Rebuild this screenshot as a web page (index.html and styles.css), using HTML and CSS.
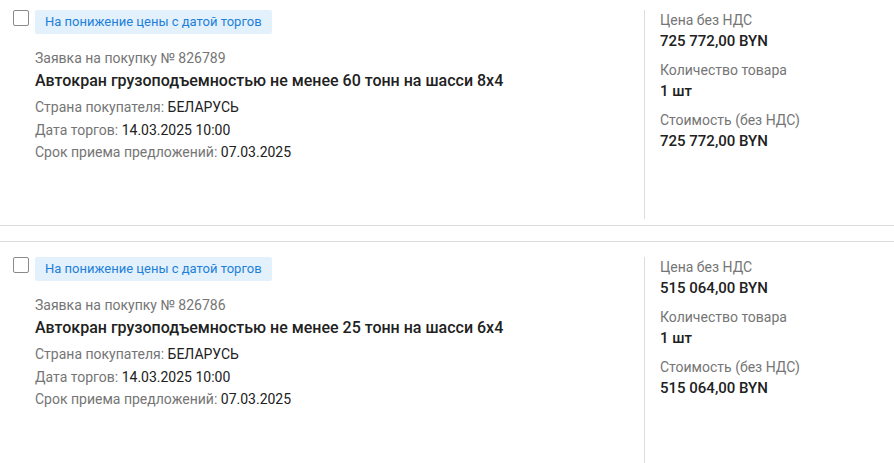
FILE: index.html
```html
<!DOCTYPE html>
<html lang="ru">
<head>
    <meta charset="UTF-8">
    <meta name="viewport" content="width=device-width, initial-scale=1.0">
    <title>Заявки на покупку</title>
    <link rel="stylesheet" href="styles.css">
</head>
<body>
    <div class="list">
        <div class="item first">
            <div class="main">
                <span class="check"></span>
                <div class="info">
                    <span class="tag">На понижение цены с датой торгов</span>
                    <div class="number">Заявка на покупку № 826789</div>
                    <div class="title">Автокран грузоподъемностью не менее 60 тонн на шасси 8x4</div>
                    <div class="line">Страна покупателя: <span>БЕЛАРУСЬ</span></div>
                    <div class="line">Дата торгов: <span>14.03.2025 10:00</span></div>
                    <div class="line">Срок приема предложений: <span>07.03.2025</span></div>
                </div>
            </div>
            <div class="side">
                <div class="group">
                    <div class="label">Цена без НДС</div>
                    <div class="value">725 772,00 BYN</div>
                </div>
                <div class="group">
                    <div class="label">Количество товара</div>
                    <div class="value">1 шт</div>
                </div>
                <div class="group">
                    <div class="label">Стоимость (без НДС)</div>
                    <div class="value">725 772,00 BYN</div>
                </div>
            </div>
        </div>

        <div class="item">
            <div class="main">
                <span class="check"></span>
                <div class="info">
                    <span class="tag">На понижение цены с датой торгов</span>
                    <div class="number">Заявка на покупку № 826786</div>
                    <div class="title">Автокран грузоподъемностью не менее 25 тонн на шасси 6x4</div>
                    <div class="line">Страна покупателя: <span>БЕЛАРУСЬ</span></div>
                    <div class="line">Дата торгов: <span>14.03.2025 10:00</span></div>
                    <div class="line">Срок приема предложений: <span>07.03.2025</span></div>
                </div>
            </div>
            <div class="side">
                <div class="group">
                    <div class="label">Цена без НДС</div>
                    <div class="value">515 064,00 BYN</div>
                </div>
                <div class="group">
                    <div class="label">Количество товара</div>
                    <div class="value">1 шт</div>
                </div>
                <div class="group">
                    <div class="label">Стоимость (без НДС)</div>
                    <div class="value">515 064,00 BYN</div>
                </div>
            </div>
        </div>
    </div>
</body>
</html>
```

FILE: styles.css
```css
body {
    margin: 0;
    font-family: Roboto, "Liberation Sans", Arial, sans-serif;
    font-size: 14px;
    color: #212121;
    background-color: white;
}
.list { overflow: hidden; height: 463px; }
.item {
    display: flex;
    padding: 15px 0 6px;
    border-top: 1px solid #dddddd;
    border-bottom: 1px solid #dddddd;
    margin-bottom: 15px;
}
.item.first { border-top: none; padding-top: 10px; }
.main {
    flex: 1;
    display: flex;
    gap: 6px;
    padding-left: 13px;
}
.check {
    width: 14px;
    height: 14px;
    border: 1px solid #8a8a8a;
    border-radius: 2px;
    flex-shrink: 0;
}
.info { display: flex; flex-direction: column; align-items: flex-start; }
.tag {
    background-color: #e3f1fd;
    color: #1e7fd9;
    font-size: 13px;
    line-height: 24px;
    padding: 0 10px;
    border-radius: 2px;
}
.number {
    color: #757575;
    line-height: 20px;
    margin-top: 14px;
}
.title {
    font-size: 16px;
    font-weight: 500;
    line-height: 24px;
    margin-top: 1px;
}
.title + .line { margin-top: 3px; }
.line { color: #757575; line-height: 22.5px; }
.line span { color: #212121; }
.side {
    width: 234px;
    height: 209px;
    border-left: 1px solid #dddddd;
    padding-left: 15px;
}
.group { margin-bottom: 9px; }
.label { color: #757575; line-height: 20px; }
.value { font-size: 15px; font-weight: 500; line-height: 20px; margin-top: 1px; }
```
